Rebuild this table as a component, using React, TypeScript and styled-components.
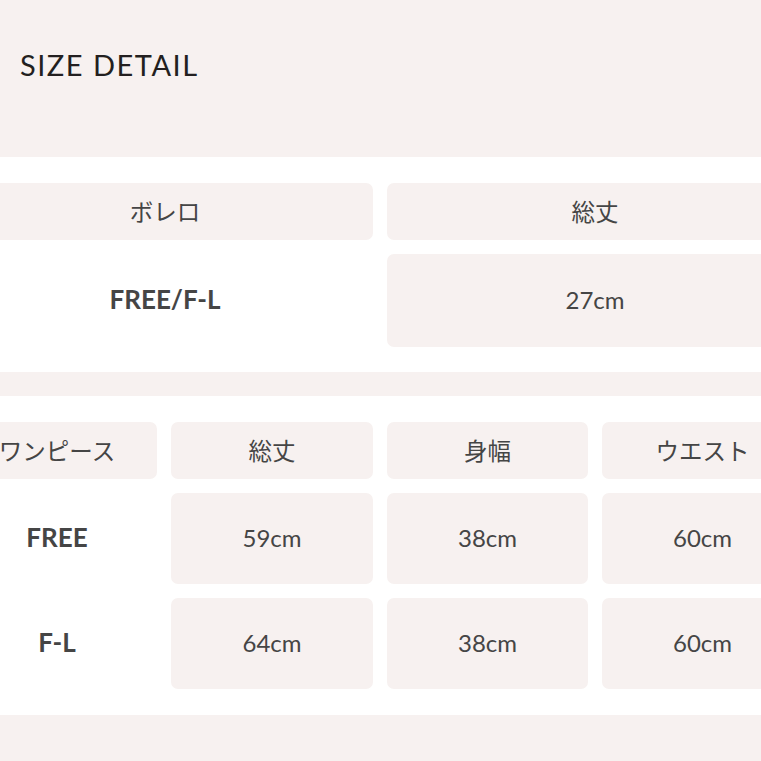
import React from "react";
import styled, { createGlobalStyle } from "styled-components";

const GlobalStyle = createGlobalStyle`
  html, body {
    margin: 0;
    padding: 0;
    background: #ffffff;
    overflow: hidden;
  }
  body {
    font-family: "Lato", "Noto Sans CJK JP", sans-serif;
    color: #444;
  }
`;

const PINK = "#f7f1f0";

const Page = styled.div`
  width: 761px;
  height: 761px;
  overflow: hidden;
  display: flex;
  flex-direction: column;
`;

const Header = styled.header`
  height: 157px;
  background: ${PINK};
  padding: 47px 0 0 20px;
  box-sizing: border-box;
  flex-shrink: 0;
`;

const Title = styled.h1`
  margin: 0;
  font-family: "Lato", sans-serif;
  font-weight: 400;
  font-size: 29px;
  line-height: 36px;
  letter-spacing: 1.5px;
  color: #231f20;
`;

const Band = styled.div<{ $h: number; $mt: number }>`
  height: ${(p) => p.$h}px;
  margin-top: ${(p) => p.$mt}px;
  background: ${PINK};
  flex-shrink: 0;
`;

const Table = styled.div<{ $cols: string; $rows: string; $mt: number }>`
  margin-left: -43px;
  margin-top: ${(p) => p.$mt}px;
  width: 846px;
  display: grid;
  grid-template-columns: ${(p) => p.$cols};
  grid-template-rows: ${(p) => p.$rows};
  column-gap: 14px;
  row-gap: 14px;
  flex-shrink: 0;
`;

const Cell = styled.div<{ $plain?: boolean; $bold?: boolean; $jp?: boolean }>`
  display: flex;
  align-items: center;
  justify-content: center;
  box-sizing: border-box;
  padding-bottom: ${(p) => (p.$jp ? "1px" : "3px")};
  border-radius: 7px;
  background: ${(p) => (p.$plain ? "transparent" : PINK)};
  font-family: ${(p) =>
    p.$jp ? `"Noto Sans CJK JP", sans-serif` : `"Lato", "Noto Sans CJK JP", sans-serif`};
  font-size: ${(p) => (p.$jp ? "23.5px" : p.$bold ? "26px" : "24px")};
  font-weight: ${(p) => (p.$bold ? 700 : 400)};
  color: #454545;
  white-space: nowrap;
`;

const rows2 = [
  { size: "FREE", values: ["59cm", "38cm", "60cm"] },
  { size: "F-L", values: ["64cm", "38cm", "60cm"] },
];

export default function App() {
  return (
    <>
      <GlobalStyle />
      <Page>
        <Header>
          <Title>SIZE DETAIL</Title>
        </Header>

        <Table $cols="416px 416px" $rows="57px 93px" $mt={26}>
          <Cell $jp>ボレロ</Cell>
          <Cell $jp>総丈</Cell>
          <Cell $plain $bold>FREE/F-L</Cell>
          <Cell>27cm</Cell>
        </Table>

        <Band $h={24} $mt={25} />

        <Table $cols="200px 202px 201px 201px" $rows="57px 91px 91px" $mt={26}>
          <Cell $jp>ワンピース</Cell>
          <Cell $jp>総丈</Cell>
          <Cell $jp>身幅</Cell>
          <Cell $jp>ウエスト</Cell>
          {rows2.map((r) => (
            <React.Fragment key={r.size}>
              <Cell $plain $bold>{r.size}</Cell>
              {r.values.map((v, i) => (
                <Cell key={i}>{v}</Cell>
              ))}
            </React.Fragment>
          ))}
        </Table>

        <Band $h={60} $mt={26} />
      </Page>
    </>
  );
}
